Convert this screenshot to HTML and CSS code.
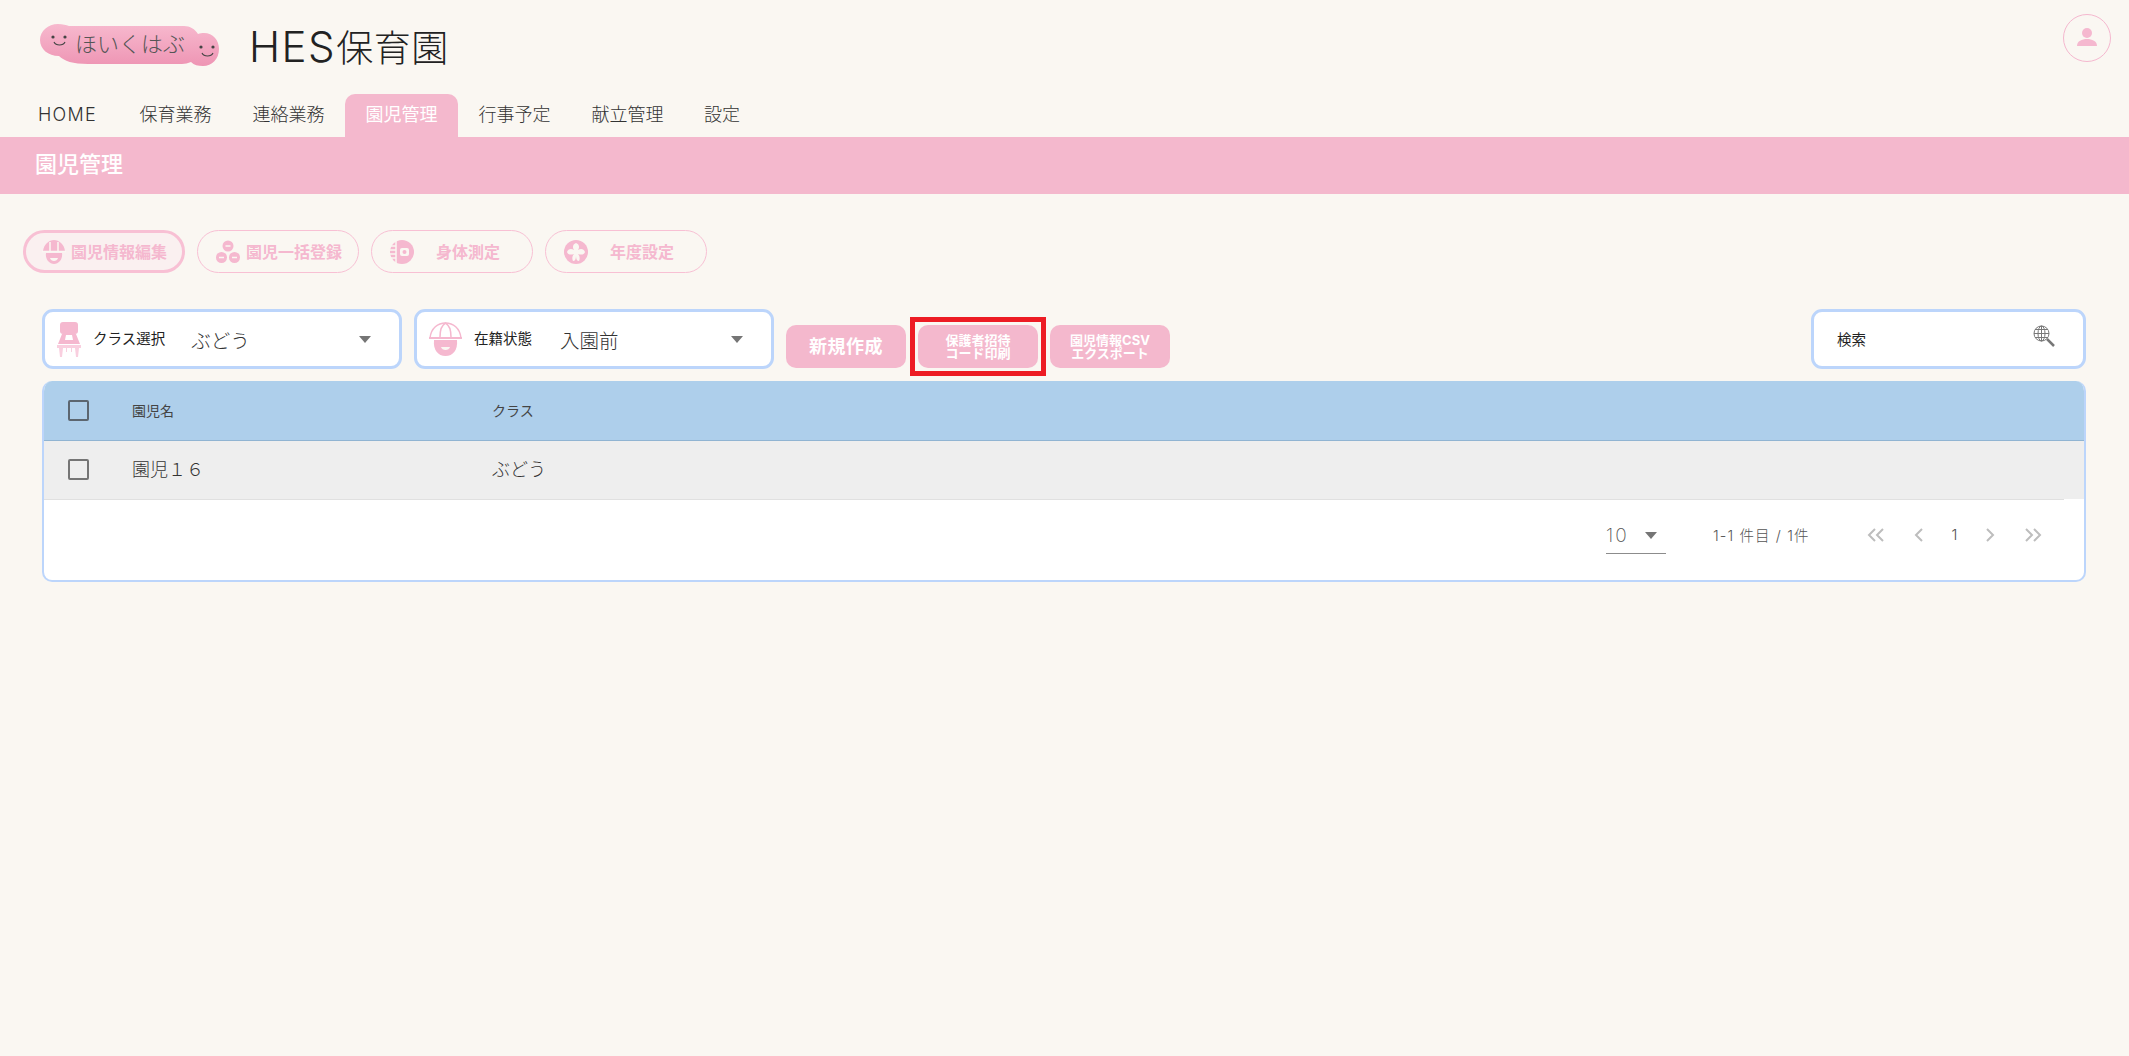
FILE: index.html
```html
<!DOCTYPE html>
<html lang="ja">
<head>
<meta charset="utf-8">
<title>園児管理</title>
<link rel="stylesheet" href="styles.css">
</head>
<body>
<header class="top">
  <svg class="logo" width="190" height="50" viewBox="0 0 190 50">
    <defs><linearGradient id="lg" x1="0" y1="0" x2="0" y2="1"><stop offset="0" stop-color="#f7b9ce"/><stop offset="1" stop-color="#ee95b4"/></linearGradient></defs>
    <path fill="url(#lg)" d="M19 33C8 33 0 26 0 17S8 1 18 1c5 0 8 1 11 2h115c6 0 11 3 14 8 2-1 4-1 6-1 9 0 15 7 15 16 0 10-7 17-16 17-5 0-9-1-12-4-3 1-6 2-9 2H48c-15 0-24-3-29-8z"/>
    <g class="smile"><circle cx="13" cy="14" r="1.600"/><circle cx="25" cy="14" r="1.600"/><path d="M14 19c2 4 9 4 11 0"/><circle cx="161" cy="24" r="1.600"/><circle cx="173" cy="24" r="1.600"/><path d="M162 30c2 4 9 4 11 0"/></g>
    <text class="logo-text" x="35" y="29">ほいくはぶ</text>
  </svg>
  <h1 class="site"><span class="site-latin">HES</span>保育園</h1>
  <div class="avatar">
    <svg width="24" height="24" viewBox="0 0 24 24"><circle cx="12" cy="7" r="5"/><path d="M2 20c0-5 5-7 10-7s10 2 10 7z"/></svg>
  </div>
</header>

<nav class="tabs">
  <a class="tab tab-home">HOME</a>
  <a class="tab">保育業務</a>
  <a class="tab">連絡業務</a>
  <a class="tab is-active">園児管理</a>
  <a class="tab">行事予定</a>
  <a class="tab">献立管理</a>
  <a class="tab tab-short">設定</a>
</nav>

<div class="band">園児管理</div>

<section class="pills">
  <a class="pill is-current">
    <svg class="pill-ico" width="24" height="24" viewBox="0 0 24 24"><path d="M1 11C2 4 7 0 12 0s10 4 11 11z"/><path class="cut" d="M0 11.500h24M8 2v9M16 2v9"/><path d="M4 13h16c1 6-3 11-8 11S3 19 4 13z"/><path class="cut-fill" d="M8 18h8c-1 4-7 4-8 0z"/></svg>
    <span class="pill-label">園児情報編集</span>
  </a>
  <a class="pill">
    <svg class="pill-ico" width="24" height="24" viewBox="0 0 24 24"><circle cx="12" cy="6" r="5.500"/><circle cx="5.500" cy="17.500" r="5.500"/><circle cx="18.500" cy="17.500" r="5.500"/><path class="cut" d="M9.500 6h5M3 17.500h5M16 17.500h5"/></svg>
    <span class="pill-label">園児一括登録</span>
  </a>
  <a class="pill">
    <svg class="pill-ico" width="24" height="24" viewBox="0 0 24 24"><circle cx="12" cy="12" r="12"/><path class="cut" d="M6 0v24M1 6h5M0 10h6M0 14h6M1 18h5"/><rect class="cut-fill" x="10" y="8" width="9" height="8" rx="2"/><circle cx="14.500" cy="12" r="2"/></svg>
    <span class="pill-label">身体測定</span>
  </a>
  <a class="pill">
    <svg class="pill-ico" width="24" height="24" viewBox="0 0 24 24"><circle cx="12" cy="12" r="12"/><path class="cut-fill" d="M12 3c3 1 4 4 2 7 3-2 6-1 7 2-1 3-4 3-7 2 2 2 2 5 1 7-2 0-3-2-3-5 0 3-1 5-3 5-1-2-1-5 1-7-3 1-6 1-7-2 1-3 4-4 7-2-2-3-1-6 2-7z"/></svg>
    <span class="pill-label">年度設定</span>
  </a>
</section>

<section class="toolbar">
  <div class="field field-select">
    <svg class="field-ico" width="24" height="35" viewBox="0 0 24 35"><rect x="3" y="0" width="18" height="12" rx="3"/><path fill-rule="evenodd" d="M5 12h14l4 10H1zM9 13l-1 5h8l-1-5z"/><rect class="chair-pale" x="0" y="23" width="24" height="3"/><path class="chair-pale" d="M2 26h4l-1 9H3zM18 26h4l-1 9h-2zM9 26h1v4H9zM14 26h1v4h-1z"/></svg>
    <span class="field-label">クラス選択</span>
    <span class="field-value">ぶどう</span>
    <span class="caret"></span>
  </div>
  <div class="field field-select">
    <svg class="field-ico" width="33" height="34" viewBox="0 0 33 34"><path class="dome" d="M1 16C2 6 9 1 16.500 1S31 6 32 16z"/><path class="dome" d="M11 15C11 8 13 3 16.500 1 20 3 22 8 22 15"/><path d="M0 15h33v2H0z"/><path d="M5 18h23c1 10-4 16-11.500 16S4 28 5 18z"/><path class="cut-fill" d="M12 25h9c-1 4-8 4-9 0z"/></svg>
    <span class="field-label">在籍状態</span>
    <span class="field-value field-value-far">入園前</span>
    <span class="caret"></span>
  </div>
  <div class="actions">
    <button class="act act-large">新規作成</button>
    <div class="callout"><button class="act">保護者招待<br>コード印刷</button></div>
    <button class="act">園児情報CSV<br>エクスポート</button>
  </div>
  <div class="field field-search">
    <span class="field-label">検索</span>
    <svg width="22" height="22" viewBox="0 0 22 22" class="globe"><circle cx="8.500" cy="8.500" r="7.500"/><ellipse cx="8.500" cy="8.500" rx="3.500" ry="7.500"/><path d="M1 8.500h15M2 4.500h13M2 12.500h13M8.500 1v15"/><path class="globe-handle" d="M14 14l7 7"/></svg>
  </div>
</section>

<section class="card">
  <div class="row row-head">
    <span class="check"></span>
    <span class="col-name">園児名</span>
    <span class="col-class">クラス</span>
  </div>
  <div class="row row-body">
    <span class="check"></span>
    <span class="col-name">園児１６</span>
    <span class="col-class">ぶどう</span>
  </div>
  <div class="pager">
    <div class="per-page"><span>10</span><span class="caret"></span></div>
    <span class="range">1-1 件目 / 1件</span>
    <div class="pages">
      <svg class="pg" width="18" height="16" viewBox="0 0 18 16"><path d="M8 2L2 8l6 6M16 2l-6 6 6 6"/></svg>
      <svg class="pg pg-prev" width="12" height="16" viewBox="0 0 12 16"><path d="M9 2L3 8l6 6"/></svg>
      <span class="pg-num">1</span>
      <svg class="pg" width="12" height="16" viewBox="0 0 12 16"><path d="M3 2l6 6-6 6"/></svg>
      <svg class="pg pg-last" width="18" height="16" viewBox="0 0 18 16"><path d="M2 2l6 6-6 6M10 2l6 6-6 6"/></svg>
    </div>
  </div>
</section>
</body>
</html>
```

FILE: styles.css
```css
* { box-sizing: border-box; }
html, body { margin: 0; height: 100%; }
body {
  background: #faf7f2;
  color: #333;
  font-family: Inter, "Noto Sans CJK JP", "Noto Sans", sans-serif;
  font-weight: 300;
}

.top { display: flex; align-items: center; height: 94px; padding: 0 18px 0 40px; }
.logo { flex: none; margin-top: 2px; }
.logo-text { font-size: 22px; fill: #555; }
.smile circle { fill: #444; }
.smile path { fill: none; stroke: #444; stroke-width: 1.200; }
.site { margin: 0 0 0 19px; font-size: 37px; font-weight: 300; color: #222; line-height: 1; letter-spacing: 0.500px; }
.site-latin { letter-spacing: 1.500px; font-size: 42px; }
.avatar {
  margin: -18px 0 0 auto;
  width: 48px; height: 48px;
  border: 1px solid #f5b8cf; border-radius: 50%;
  display: flex; align-items: center; justify-content: center;
}
.avatar svg { fill: #f5b8cf; }

.tabs { display: flex; height: 43px; padding-left: 18px; }
.tab {
  width: 113px; padding-top: 1px;
  font-size: 18px; line-height: 39px; text-align: center; color: #333;
  border-radius: 10px 10px 0 0;
}
.tab-home { width: 101px; text-align: left; padding-left: 20px; letter-spacing: 1.300px; }
.tab-short { width: 76px; }
.tab.is-active { background: #f4b8cd; color: #fff; font-weight: 400; }

.band {
  height: 57px; padding-left: 35px;
  background: #f4b8cd; color: #fff;
  font-size: 22px; font-weight: 500; line-height: 55px;
}

.pills { display: flex; gap: 12px; margin: 36px 0 0 23px; }
.pill {
  display: flex; align-items: center;
  width: 162px; height: 43px; padding-left: 18px;
  border: 1.500px solid #f8c0d4; border-radius: 22px;
  color: #f5b8cf; font-size: 16px; font-weight: 700;
}
.pill.is-current { border-width: 3px; background: #faf0f0; padding-left: 16px; }
.pill-ico { flex: none; fill: #f5b8cf; }
.pill-label { flex: 1; margin-top: -2px; padding-right: 10px; text-align: center; white-space: nowrap; }
.cut { stroke: #faf7f2; stroke-width: 1.500; fill: #faf7f2; }
.cut-fill { fill: #faf7f2; }

.toolbar { display: flex; align-items: flex-start; margin: 36px 43px 0 42px; }
.field {
  display: flex; align-items: center;
  height: 60px;
  background: #fff;
  border: 3px solid #bcd5fb; border-radius: 11px;
}
.field-select { width: 360px; padding: 0 28px 0 12px; }
.field-select + .field-select { margin-left: 12px; }
.field-ico { flex: none; fill: #f5b8cf; }
.chair-pale { fill: #f9cfdf; }
.dome { fill: #fff; stroke: #f5b8cf; stroke-width: 1.500; }
.field-label { flex: none; margin: -4px 0 0 12px; font-size: 14.500px; font-weight: 400; color: #222; white-space: nowrap; }
.field-value { flex: 1; margin-left: 26px; font-size: 19.500px; color: #333; white-space: nowrap; }
.field-value-far { margin-left: 28px; }
.caret {
  flex: none; width: 0; height: 0;
  border-left: 6px solid transparent; border-right: 6px solid transparent;
  border-top: 7px solid #757575;
}
.field-search { width: 275px; margin-left: auto; padding: 0 28px 0 11px; justify-content: space-between; }
.field-search .field-label { margin-top: -2px; }
.globe { fill: none; stroke: #777; stroke-width: 1; margin-top: -6px; }
.globe-handle { stroke-width: 2.500; }

.actions { display: flex; align-items: center; gap: 4px; margin: 8px 0 0 12px; }
.act {
  display: block;
  width: 120px; height: 43px; padding: 0;
  border: 0; border-radius: 10px;
  background: #f4b8cd; color: #fff;
  font-family: inherit; font-size: 13px; font-weight: 700; line-height: 13px;
}
.act-large { font-size: 18px; letter-spacing: 0.500px; }
.callout { padding: 3px; border: 5px solid #ed1c24; }

.card {
  height: 201px; margin: 5px 43px 0 42px;
  background: #fff;
  border: 2px solid #bcd5fb; border-top: 0; border-radius: 10px;
  overflow: hidden;
}
.row { display: grid; grid-template-columns: 88px 360px 1fr; align-items: center; }
.row-head { height: 60px; background: #aecfeb; border-bottom: 1px solid #90b4d2; font-size: 14px; font-weight: 400; color: #444; }
.row-head .col-name, .row-head .col-class { margin-top: -2px; }
.row-body { height: 58px; background: #eee; font-size: 18px; color: #333; }
.row-body .col-name, .row-body .col-class { margin-top: -4px; }
.check {
  width: 21px; height: 21px; margin-left: 24px;
  border: 2px solid #5c6670; border-radius: 2px;
}
.row-body .check { margin-top: -2px; border-color: #757575; }

.pager { display: flex; align-items: center; height: 78px; margin-right: 20px; padding: 0 0 8px 1562px; border-top: 1px solid #e0e0e0; }
.per-page {
  display: flex; align-items: center; justify-content: space-between;
  flex: none;
  width: 60px; height: 34px; padding: 0 9px 2px 0; margin-top: 5px;
  border-bottom: 1px solid #8c8c8c;
  font-size: 19px; font-weight: 200; letter-spacing: 2px; color: #555;
}
.range { flex: none; width: 106px; margin-left: 47px; font-size: 14.500px; letter-spacing: 1.100px; color: #555; white-space: nowrap; }
.pages { display: flex; align-items: center; margin-left: 48px; }
.pg { flex: none; fill: none; stroke: #bdbdbd; stroke-width: 2; }
.pg-prev { margin-left: 28px; }
.pg-last { margin-left: 28px; }
.pg-num { width: 59px; text-align: center; font-size: 15px; color: #555; }
```
